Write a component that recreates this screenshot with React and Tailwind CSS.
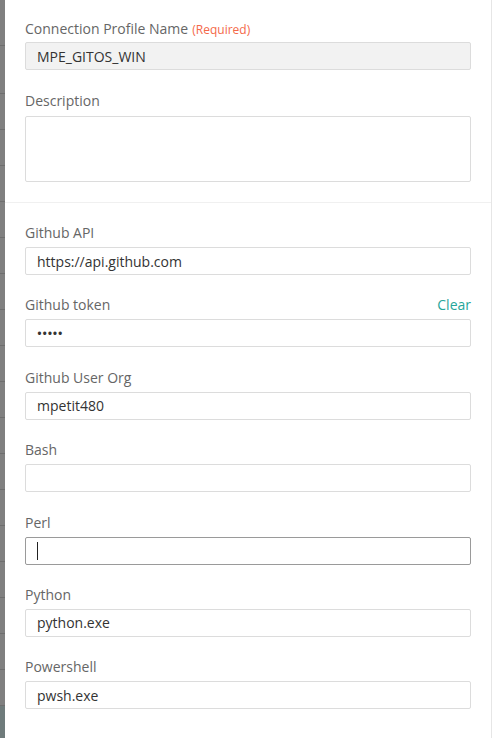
const stripeLines = [46, 95, 132, 169, 206, 243, 280, 317, 354, 391, 428, 465, 502, 539, 576, 613, 650, 687, 724];

// Backdrop rows peeking out on the left of the slide-over panel
const BackdropStrip = () => {
  const rows = [];
  let prev = 0;
  stripeLines.forEach((y, i) => {
    rows.push(
      <div key={i} className="border-b border-[#6e6e6e] bg-[#808080]" style={{ height: y - prev }} />
    );
    prev = y + 1;
  });
  return (
    <div className="w-[5px] shrink-0 flex flex-col bg-[#808080]">
      {rows}
      <div className="flex-1 bg-[#6f7b7b]" />
    </div>
  );
};

const Field = ({ label, value, action, focused, masked }) => (
  <div className="flex flex-col">
    <div className="flex justify-between items-end h-[20px] leading-[20px] mb-[4px]">
      <span className="text-[14px] text-[#666]">{label}</span>
      {action && <span className="text-[14px] text-[#26a69a]">{action}</span>}
    </div>
    <div
      className={`h-[28px] flex items-center px-[11px] rounded-[2px] border bg-white text-[14px] text-[#333] ${
        focused ? 'border-[#9a9a9a]' : 'border-[#dcdcdc]'
      }`}
    >
      {focused && <span className="block w-px h-[18px] bg-[#222]" />}
      {masked ? <span className="text-[13px] font-semibold tracking-[0.3px]">•••••</span> : value}
    </div>
  </div>
);

export default function App() {
  return (
    <div className="w-[494px] h-[738px] flex bg-white overflow-hidden" style={{ fontFamily: '"Open Sans", sans-serif' }}>
      <BackdropStrip />

      <div className="w-[487px] shrink-0 border-r border-[#e6e6e6] flex flex-col">
        {/* General */}
        <div className="px-[20px] pt-[18px] pb-[20px] flex flex-col">
          <div className="h-[20px] leading-[20px] mb-[4px]">
            <span className="text-[14px] text-[#666]">Connection Profile Name</span>{' '}
            <span className="text-[12px] text-[#f4694a]">(Required)</span>
          </div>
          <div className="h-[28px] flex items-center px-[11px] rounded-[2px] border border-[#dcdcdc] bg-[#f2f2f2] text-[14px] text-[#333]">
            MPE_GITOS_WIN
          </div>

          <div className="h-[20px] leading-[20px] mt-[20px] mb-[6px]">
            <span className="text-[14px] text-[#666]">Description</span>
          </div>
          <div className="h-[66px] rounded-[2px] border border-[#dcdcdc] bg-white" />
        </div>

        <div className="h-px bg-[#f0f0f0]" />

        {/* Settings */}
        <div className="px-[20px] pt-[20px] flex flex-col gap-[20.4px]">
          <Field label="Github API" value="https://api.github.com" />
          <Field label="Github token" action="Clear" masked />
          <Field label="Github User Org" value="mpetit480" />
          <Field label="Bash" value="" />
          <Field label="Perl" value="" focused />
          <Field label="Python" value="python.exe" />
          <Field label="Powershell" value="pwsh.exe" />
        </div>
      </div>

      <div className="flex-1 bg-white" />
    </div>
  );
}
